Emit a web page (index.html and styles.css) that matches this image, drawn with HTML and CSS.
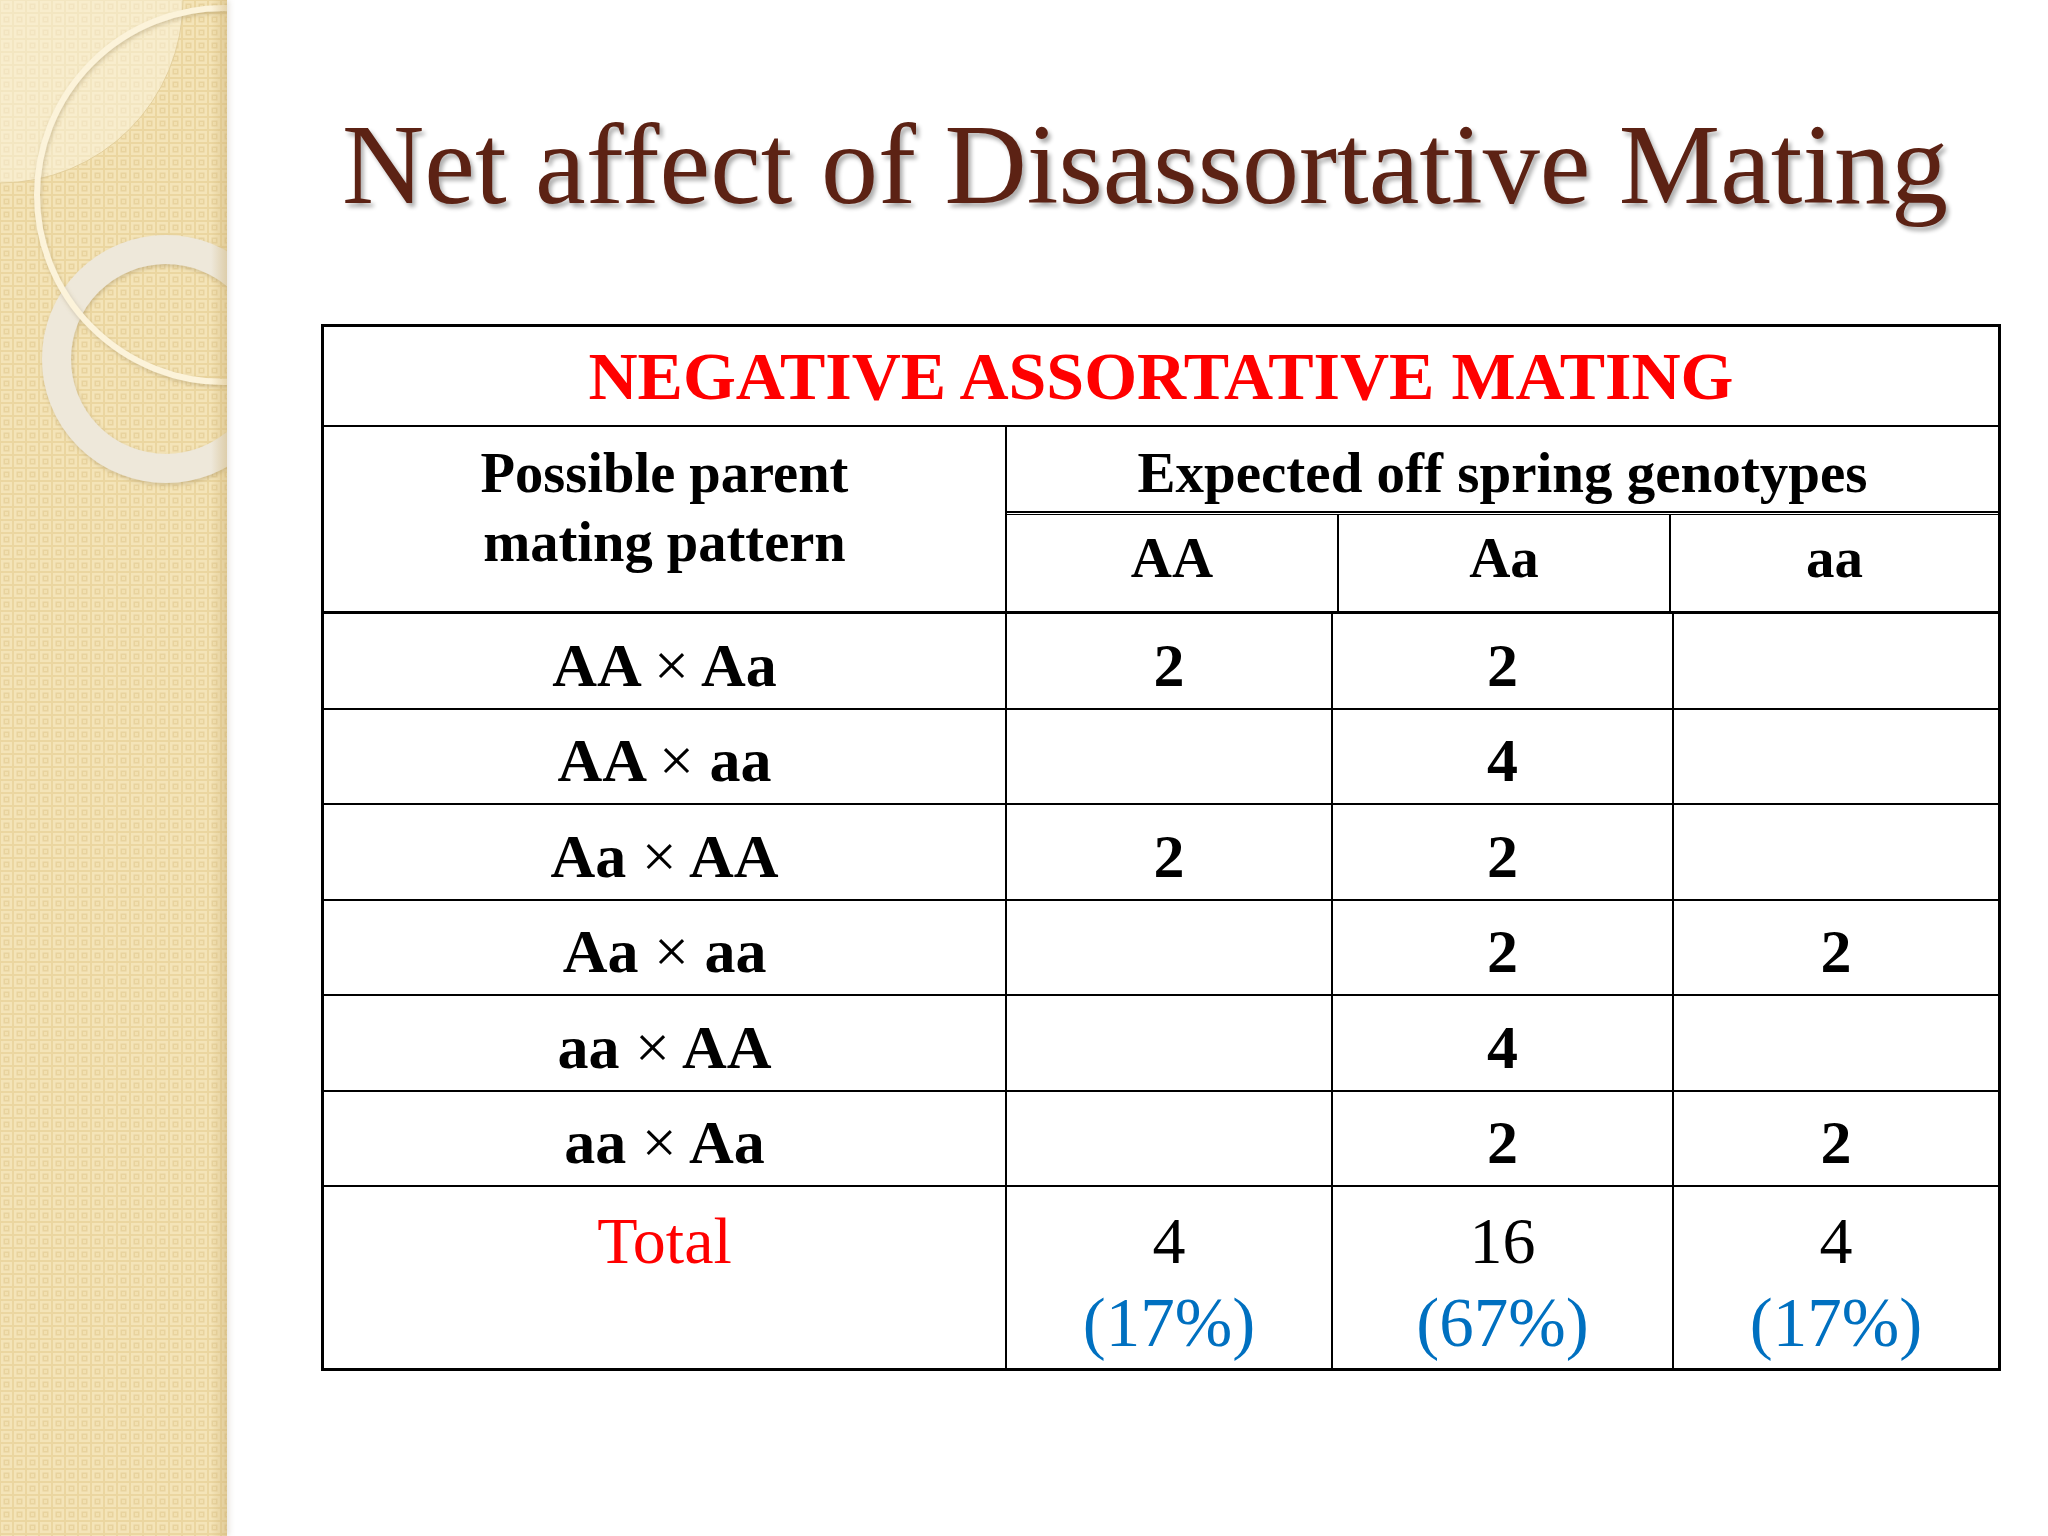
FILE: index.html
```html
<!DOCTYPE html>
<html lang="en">
<head>
<meta charset="utf-8">
<title>Net affect of Disassortative Mating</title>
<link rel="stylesheet" href="styles.css">
</head>
<body>
<div class="slide">
  <div class="strip">
    <svg class="art" width="227" height="1536" viewBox="0 0 227 1536" xmlns="http://www.w3.org/2000/svg">
      <defs>
        <pattern id="weave" width="13" height="13" patternUnits="userSpaceOnUse">
          <rect width="13" height="13" fill="#ebd6a0"/>
          <rect x="1" y="1" width="11" height="11" fill="#f4e4b8"/>
          <rect x="3.5" y="3.5" width="6" height="6" fill="#e8d39e"/>
          <rect x="5" y="5" width="3" height="3" fill="#f2e0b0"/>
        </pattern>
        <linearGradient id="edge" x1="0" y1="0" x2="1" y2="0">
          <stop offset="0" stop-color="#c9ad70" stop-opacity="0"/>
          <stop offset="1" stop-color="#c9ad70" stop-opacity="0.45"/>
        </linearGradient>
        <filter id="sh" x="-20%" y="-20%" width="140%" height="140%">
          <feDropShadow dx="1" dy="2" stdDeviation="2" flood-color="#8a7448" flood-opacity="0.35"/>
        </filter>
      </defs>
      <rect width="227" height="1536" fill="url(#weave)"/>
      <path d="M0 0 H183 A183 183 0 0 1 0 183 Z" fill="#fcf6e2" opacity="0.5"/>
      <path d="M183 0 A183 183 0 0 1 0 183" fill="none" stroke="#e3cf9c" stroke-width="1"/>
      <circle cx="166" cy="359" r="109.5" fill="none" stroke="#eee8da" stroke-width="29" filter="url(#sh)"/>
      <circle cx="224" cy="195" r="187" fill="none" stroke="#fcf3da" stroke-width="6" filter="url(#sh)"/>
      <rect x="211" y="0" width="16" height="1536" fill="url(#edge)"/>
    </svg>
  </div>
  <main class="content">
    <h1 class="title">Net affect of Disassortative Mating</h1>

    <div class="thead">
      <div class="cell banner">NEGATIVE ASSORTATIVE MATING</div>
      <div class="cell parent">Possible parent<br>mating pattern</div>
      <div class="cell expected">Expected off spring genotypes</div>
      <div class="cell geno">AA</div>
      <div class="cell geno">Aa</div>
      <div class="cell geno">aa</div>
    </div>

    <div class="tbody">
      <div class="cell row">AA <span class="x">×</span> Aa</div>
      <div class="cell row">2</div>
      <div class="cell row">2</div>
      <div class="cell row"></div>

      <div class="cell row">AA <span class="x">×</span> aa</div>
      <div class="cell row"></div>
      <div class="cell row">4</div>
      <div class="cell row"></div>

      <div class="cell row">Aa <span class="x">×</span> AA</div>
      <div class="cell row">2</div>
      <div class="cell row">2</div>
      <div class="cell row"></div>

      <div class="cell row">Aa <span class="x">×</span> aa</div>
      <div class="cell row"></div>
      <div class="cell row">2</div>
      <div class="cell row">2</div>

      <div class="cell row">aa <span class="x">×</span> AA</div>
      <div class="cell row"></div>
      <div class="cell row">4</div>
      <div class="cell row"></div>

      <div class="cell row">aa <span class="x">×</span> Aa</div>
      <div class="cell row"></div>
      <div class="cell row">2</div>
      <div class="cell row">2</div>

      <div class="cell total"><span class="red">Total</span></div>
      <div class="cell total">4<br><span class="blue">(17%)</span></div>
      <div class="cell total">16<br><span class="blue">(67%)</span></div>
      <div class="cell total">4<br><span class="blue">(17%)</span></div>
    </div>
  </main>
</div>
</body>
</html>
```

FILE: styles.css
```css
html, body {
  margin: 0;
  padding: 0;
  background: #ffffff;
}

body {
  font-family: "Liberation Serif", "Times New Roman", serif;
  color: #000;
}

.slide {
  display: flex;
  width: 2048px;
  height: 1536px;
  overflow: hidden;
  background: #ffffff;
}

.strip {
  flex: 0 0 227px;
  height: 1536px;
  box-shadow: 2px 0 6px rgba(120, 100, 60, 0.18);
  position: relative;
  z-index: 1;
}

.art {
  display: block;
}

.content {
  flex: 1;
  padding-left: 94px;
}

.title {
  margin: 102px 0 0 21px;
  font-size: 114px;
  line-height: 125px;
  font-weight: 400;
  color: #5c2214;
  white-space: nowrap;
  text-shadow: 3px 4px 4px rgba(0, 0, 0, 0.32);
}

.thead {
  margin-top: 97px;
  width: 1680px;
  box-sizing: border-box;
  display: grid;
  grid-template-columns: 681px 330px 330px 327px;
  grid-template-rows: 98px 86px 96px;
  gap: 2px;
  padding: 3px;
  background: #000;
}

.tbody {
  width: 1680px;
  box-sizing: border-box;
  display: grid;
  grid-template-columns: 681px 324px 339px 324px;
  grid-template-rows: 94px 93px 94px 93px 94px 93px 181px;
  gap: 2px;
  padding: 0 3px 3px 3px;
  background: #000;
}

.cell {
  background: #fff;
  text-align: center;
  font-weight: 700;
  box-sizing: border-box;
}

.banner {
  grid-column: 1 / -1;
  color: #ff0000;
  font-size: 68px;
  line-height: 79px;
  padding-top: 10px;
}

.parent {
  grid-column: 1;
  grid-row: 2 / 4;
  font-size: 56.5px;
  line-height: 69px;
  padding-top: 12px;
}

.expected {
  grid-column: 2 / 5;
  grid-row: 2;
  font-size: 57px;
  line-height: 69px;
  padding-top: 11px;
  border-bottom: 2px solid #000;
  box-shadow: 0 1px 0 #fff;
}

.geno {
  font-size: 57px;
  line-height: 69px;
  padding-top: 8px;
}

.row {
  display: flex;
  align-items: center;
  justify-content: center;
  font-size: 62px;
  line-height: 69px;
  padding-top: 8px;
  white-space: pre;
}

.x {
  font-weight: 400;
}

.total {
  font-weight: 400;
  font-size: 66px;
  line-height: 82px;
  padding-top: 13px;
}

.red {
  color: #ff0000;
}

.blue {
  color: #0070c0;
  font-size: 69px;
}
```
